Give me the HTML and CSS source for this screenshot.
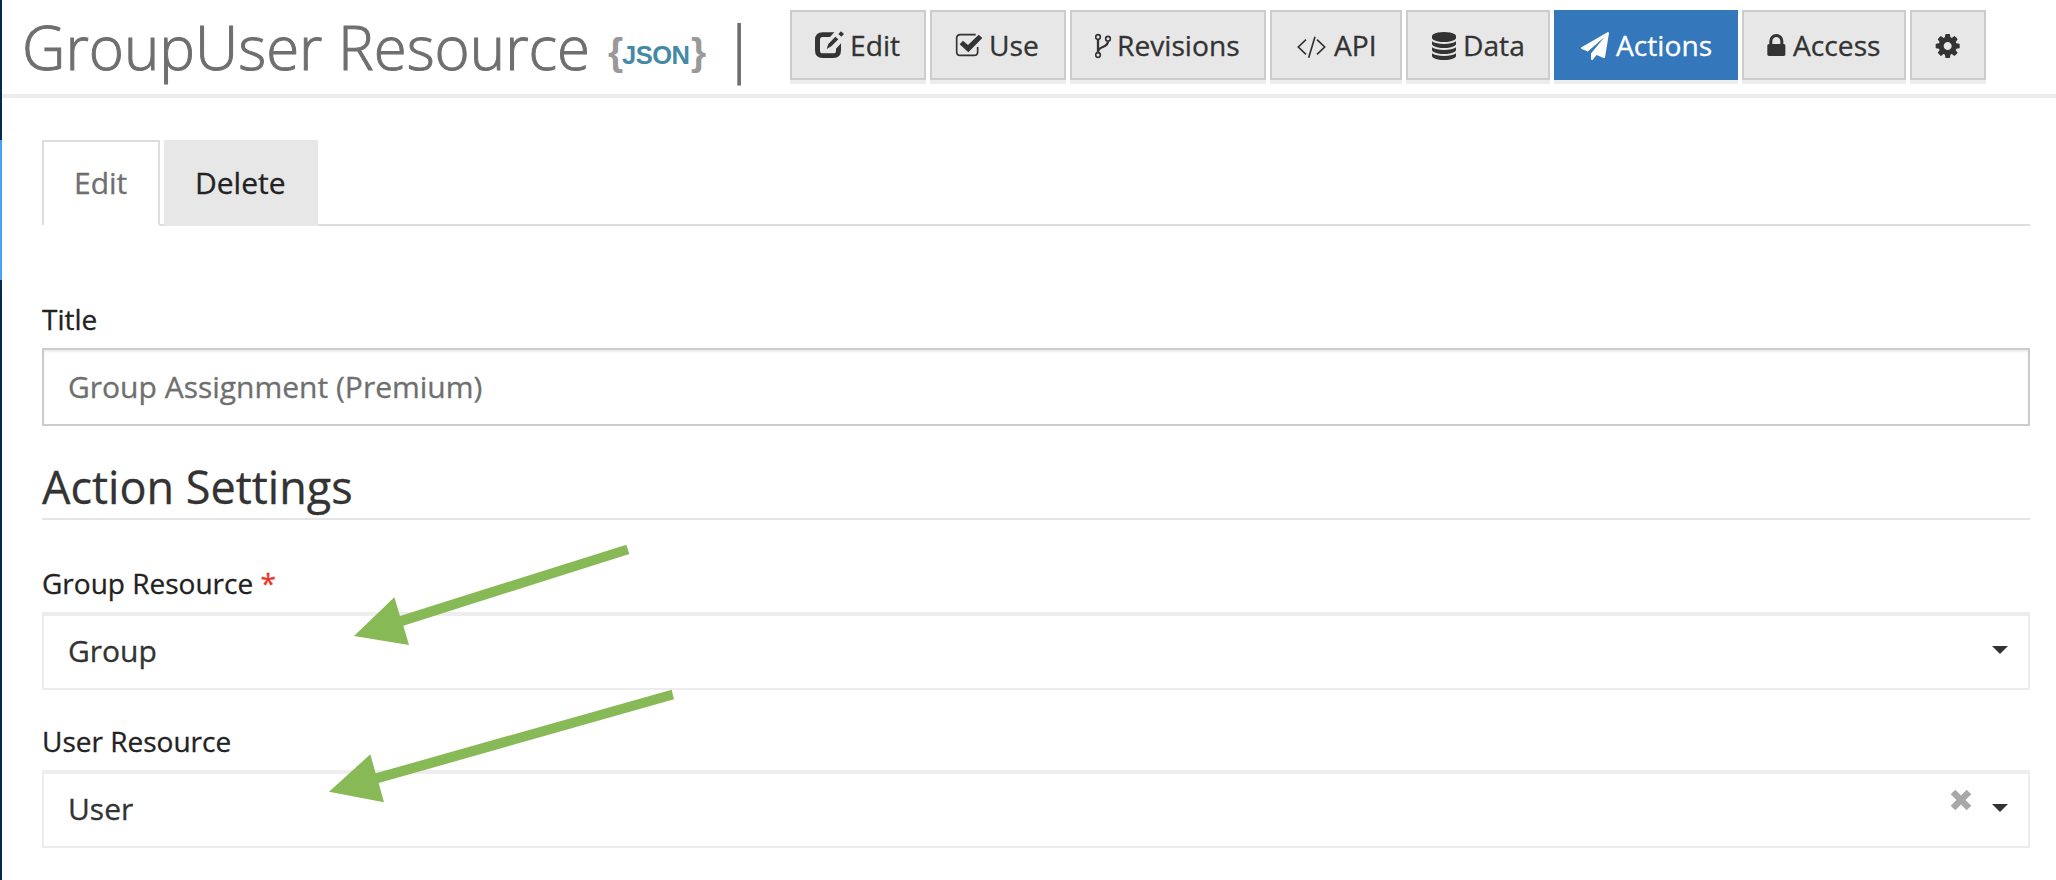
FILE: index.html
```html
<!DOCTYPE html>
<html lang="en">
<head>
<meta charset="utf-8">
<title>GroupUser Resource</title>
<link rel="stylesheet" href="styles.css">
</head>
<body>
<div class="app">
  <aside class="rail"><div class="rail-active"></div></aside>
  <main class="page">
    <header class="header">
      <h1 class="title">GroupUser Resource</h1>
      <svg class="json" width="98" height="44" viewBox="0 0 98 44">
        <text class="brace" x="0" y="31.500">{</text>
        <text class="json-text" x="14" y="30.500" textLength="68">JSON</text>
        <text class="brace" x="83" y="31.500">}</text>
      </svg>
      <span class="divider">|</span>
      <nav class="toolbar">
        <a class="btn btn-edit"><svg width="35" height="40" viewBox="105 75 105 120"><path d="M163 97H128Q105 97 105 120V151Q105 174 128 174H160Q183 174 183 151V130L168 146V152Q168 160 160 160H128Q120 160 120 152V119Q120 111 128 111H150zM140 147L145 132L166 110L175 118L154 139zM175 102L183 94L192 102L184 110z"/></svg>Edit</a>
        <a class="btn btn-use"><svg width="34" height="40" viewBox="525 75 102 120"><path class="line" d="M587 104H541Q530 104 530 115V155Q530 166 541 166H582Q593 166 593 155V141"/><path d="M539 133L549 122L564 135L596 104L607 114L565 157z"/></svg>Use</a>
        <a class="btn btn-revisions"><svg width="22" height="40" viewBox="105 75 66 120"><g class="line"><circle cx="114" cy="111" r="7"/><circle cx="114" cy="165" r="7"/><circle cx="144" cy="116" r="7"/></g><path class="branch" d="M114 118V158M144 124C144 146 114 136 114 156"/></svg>Revisions</a>
        <a class="btn btn-api"><svg width="39" height="40" viewBox="705 75 117 120"><path class="line" d="M738 119L715 141L738 163M765 110L746 173M771 119L794 141L771 163"/></svg>API</a>
        <a class="btn btn-data"><svg width="32" height="40" viewBox="123 75 96 120"><path transform="translate(126 96) scale(.0469)" d="M768 768q237 0 443-43t325-127v170q0 69-103 128t-280 93.500-385 34.500-385-34.500-280-93.500-103-128v-170q119 84 325 127t443 43zm0 768q237 0 443-43t325-127v170q0 69-103 128t-280 93.500-385 34.500-385-34.500-280-93.500-103-128v-170q119 84 325 127t443 43zm0-384q237 0 443-43t325-127v170q0 69-103 128t-280 93.500-385 34.500-385-34.500-280-93.500-103-128v-170q119 84 325 127t443 43zm0-1152q208 0 385 34.500t280 93.500 103 128v128q0 69-103 128t-280 93.500-385 34.500-385-34.500-280-93.500-103-128v-128q0-69 103-128t280-93.500 385-34.500z"/></svg>Data</a>
        <a class="btn btn-actions active"><svg width="37" height="40" viewBox="567 75 111 120"><path transform="translate(573 96) scale(.0469)" d="M1764 11q33 24 27 64l-256 1536q-5 29-32 45-14 8-31 8-11 0-24-5l-453-185-242 295q-18 23-49 23-13 0-22-4-19-7-30.500-23.500t-11.500-36.500v-349l864-1059-1069 925-395-162q-37-14-40-55-2-40 32-59l1664-960q15-9 32-9 20 0 36 11z"/></svg>Actions</a>
        <a class="btn btn-access"><svg width="26" height="40" viewBox="141 75 78 120"><path transform="translate(142 96) scale(.0469)" d="M320 768h512v-192q0-106-75-181t-181-75-181 75-75 181v192zm832 96v576q0 40-28 68t-68 28h-960q-40 0-68-28t-28-68v-576q0-40 28-68t68-28h32v-192q0-184 132-316t316-132 316 132 132 316v192h32q40 0 68 28t28 68z"/></svg>Access</a>
        <a class="btn btn-settings"><svg width="26" height="40" viewBox="645 75 78 120"><path transform="translate(647 96) scale(.0469)" d="M1024 896q0-106-75-181t-181-75-181 75-75 181 75 181 181 75 181-75 75-181zm512-109v222q0 12-8 23t-20 13l-185 28q-19 54-39 91 35 50 107 138 10 12 10 25t-9 23q-27 37-99 108t-94 71q-12 0-26-9l-138-108q-44 23-91 38-16 136-29 186-7 28-36 28h-222q-14 0-24.500-8.500t-11.500-21.500l-28-184q-49-16-90-37l-141 107q-10 9-25 9-14 0-25-11-126-114-165-168-7-10-7-23 0-12 8-23 15-21 51-66.500t54-70.500q-27-50-41-99l-183-27q-13-2-21-12.500t-8-23.500v-222q0-12 8-23t19-13l186-28q14-46 39-92-40-57-107-138-10-12-10-24 0-10 9-23 26-36 98.500-107.500t94.500-71.500q13 0 26 10l138 107q44-23 91-38 16-136 29-186 7-28 36-28h222q14 0 24.500 8.500t11.500 21.500l28 184q49 16 90 37l142-107q9-9 24-9 13 0 25 10 129 119 165 170 7 8 7 22 0 12-8 23-15 21-51 66.500t-54 70.500q26 50 41 98l183 28q13 2 21 12.500t8 23.500z"/></svg></a>
      </nav>
    </header>
    <section class="content">
      <nav class="tabs">
        <a class="tab tab-current">Edit</a>
        <a class="tab tab-delete">Delete</a>
      </nav>
      <div class="field field-title">
        <label class="label">Title</label>
        <div class="control input">Group Assignment (Premium)</div>
      </div>
      <h2 class="heading">Action Settings</h2>
      <div class="field field-group">
        <label class="label">Group Resource <span class="required">*</span></label>
        <div class="control select"><span class="value">Group</span><svg class="caret" width="16" height="8" viewBox="0 0 16 8"><path d="M0 0H16L8 8z"/></svg></div>
      </div>
      <div class="field field-user">
        <label class="label">User Resource</label>
        <div class="control select"><span class="value">User</span><svg class="clear" width="22" height="22" viewBox="0 0 22 22"><path d="M3 3L19 19M19 3L3 19"/></svg><svg class="caret" width="16" height="8" viewBox="0 0 16 8"><path d="M0 0H16L8 8z"/></svg></div>
      </div>
    </section>
  </main>
  <svg class="arrows" width="400" height="300" viewBox="0 0 1200 900">
    <path d="M162 318L283 202L300 258L979 44L988 72L310 287L327 345z"/>
    <path d="M87 785L211 673L227 730L1115 479L1122 508L236 759L252 817z"/>
  </svg>
</div>
</body>
</html>
```
FILE: styles.css
```css
* { box-sizing: border-box; }
body {
  margin: 0;
  background: #fff;
  color: #222;
  font-family: "Open Sans", "Noto Sans", sans-serif;
  font-size: 30px;
  -webkit-text-stroke: .3px currentColor;
}
.app { position: relative; display: flex; height: 880px; overflow: hidden; }
.rail { width: 2px; flex: none; background: #05294b; padding-top: 140px; }
.rail-active { height: 140px; background: #46a1f8; }
.page { flex: 1; min-width: 0; }
.header {
  display: flex;
  align-items: flex-start;
  height: 98px;
  padding-left: 20px;
  border-bottom: 4px solid #ededed;
}
.title {
  width: 586px;
  margin: 0;
  font-size: 60px;
  font-weight: 300;
  line-height: 94px;
  color: #6f6f6f;
  white-space: nowrap;
  -webkit-text-stroke-width: 1px;
}
.json { flex: none; margin-top: 33px; overflow: visible; -webkit-text-stroke-width: 0; }
.brace { font: bold 39px "Liberation Sans", Arial, sans-serif; fill: #999; }
.json-text { font: bold 25.500px "Liberation Sans", Arial, sans-serif; fill: #448aa6; }
.divider {
  width: 33px;
  margin: 0 34px 0 17px;
  font-size: 60px;
  font-weight: 300;
  line-height: 94px;
  color: #6f6f6f;
  -webkit-text-stroke-width: 1px;
}
.toolbar { display: flex; gap: 4px; padding-top: 10px; }
.btn {
  display: flex;
  align-items: center;
  height: 70px;
  padding-left: 23px;
  border: 2px solid #ccc;
  background: #e7e7e7;
  box-shadow: 0 4px 0 #ededed;
  color: #333;
  font-size: 28.200px;
  line-height: 66px;
  white-space: nowrap;
}
.btn svg { flex: none; fill: currentColor; }
.btn .line { fill: none; stroke: currentColor; stroke-width: 5; }
.btn .branch { fill: none; stroke: currentColor; stroke-width: 7; }
.btn-edit, .btn-use { width: 136px; }
.btn-revisions { width: 196px; }
.btn-api { width: 132px; }
.btn-data { width: 144px; }
.btn-actions { width: 184px; }
.btn-access { width: 164px; }
.btn-settings { width: 76px; }
.btn.active { border-color: #3477bb; background: #3477bb; color: #fff; }
.content { padding: 42px 26px 0 40px; }
.tabs { display: flex; gap: 4px; height: 86px; box-shadow: inset 0 -2px 0 #ddd; }
.tab { height: 86px; padding-left: 31px; line-height: 86px; }
.tab-current {
  width: 118px;
  padding-left: 30px;
  border: 2px solid #ddd;
  border-bottom-color: #fff;
  background: #fff;
  color: #6f6f6f;
  line-height: 82px;
}
.tab-delete { width: 154px; background: #e7e7e7; }
.field-title { margin-top: 73px; }
.field-group { margin-top: 43px; }
.field-user { margin-top: 31px; }
.label { display: block; margin-bottom: 9px; font-size: 28px; line-height: 40px; }
.required { color: #eb3323; }
.control {
  display: flex;
  align-items: center;
  height: 78px;
  padding: 0 20px 0 24px;
  border: 2px solid #ccc;
  line-height: 74px;
}
.input { color: #6f6f6f; box-shadow: inset 0 2px 2px rgba(0, 0, 0, .075); }
.select { border-color: #ededed; color: #333; box-shadow: inset 0 2px 1px #ededed; }
.value { flex: 1; }
.caret { fill: #333; margin-bottom: 2px; }
.clear { margin: 0 20px 18px 0; fill: none; stroke: #a8a8a8; stroke-width: 6.500; }
.heading {
  margin: 30px 0 0;
  border-bottom: 2px solid #e5e5e5;
  color: #333;
  font-size: 45px;
  font-weight: 400;
  line-height: 62px;
}
.arrows { position: absolute; left: 300px; top: 530px; fill: #87b956; }
```
